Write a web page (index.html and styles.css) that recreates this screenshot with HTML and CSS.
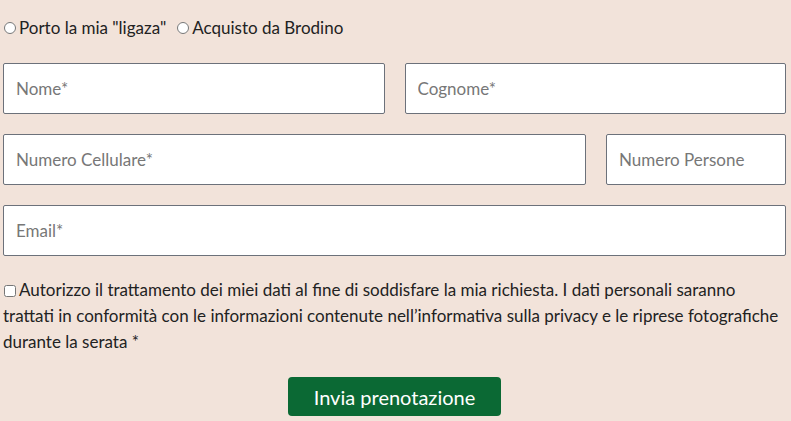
FILE: index.html
```html
<!DOCTYPE html>
<html lang="it">
<head>
<meta charset="utf-8">
<title>Prenotazione</title>
<link rel="stylesheet" href="styles.css">
</head>
<body>
<form class="form">
  <div class="choices">
    <label class="choice"><input type="radio" name="ligaza" class="radio">Porto la mia "ligaza"</label>
    <label class="choice"><input type="radio" name="ligaza" class="radio">Acquisto da Brodino</label>
  </div>
  <div class="row row-half">
    <input class="field" type="text" placeholder="Nome*">
    <input class="field" type="text" placeholder="Cognome*">
  </div>
  <div class="row row-phone">
    <input class="field" type="text" placeholder="Numero Cellulare*">
    <input class="field" type="text" placeholder="Numero Persone">
  </div>
  <div class="row row-full">
    <input class="field" type="email" placeholder="Email*">
  </div>
  <label class="consent"><input type="checkbox" class="check">Autorizzo il trattamento dei miei dati al fine di soddisfare la mia richiesta. I dati personali saranno trattati in conformità con le informazioni contenute nell’informativa sulla privacy e le riprese fotografiche durante la serata *</label>
  <div class="actions">
    <button type="button" class="submit">Invia prenotazione</button>
  </div>
</form>
</body>
</html>
```
FILE: styles.css
```css
html, body {
  margin: 0;
  padding: 0;
  background: #f2e3da;
}
body {
  font-family: Lato, "Open Sans", sans-serif;
  color: #222;
  font-size: 17px;
}
.form {
  width: 783px;
  margin-left: 3px;
  padding-top: 15px;
  display: flex;
  flex-direction: column;
}
.choices {
  display: flex;
  gap: 10px;
  line-height: 26px;
  height: 26px;
  margin-bottom: 22px;
}
.choice {
  display: flex;
  align-items: center;
}
.radio {
  width: 12px;
  height: 12px;
  margin: 0 3px 0 1px;
}
.row {
  display: grid;
  gap: 20px;
  margin-bottom: 20px;
}
.row-half { grid-template-columns: 1fr 1fr; }
.row-phone { grid-template-columns: 1fr 180px; }
.row-full { grid-template-columns: 1fr; margin-bottom: 21px; }
.field {
  box-sizing: border-box;
  height: 51px;
  border: 1px solid #6c717a;
  border-radius: 2px;
  background: #fff;
  padding: 0 12px;
  font-family: Lato, sans-serif;
  font-size: 17px;
  color: #222;
}
.field::placeholder { color: #777; }
.consent {
  display: block;
  line-height: 26px;
  font-size: 17px;
  color: #222;
}
.check {
  width: 12px;
  height: 12px;
  margin: 0 3px 0 1px;
  vertical-align: -1px;
}
.actions {
  display: flex;
  justify-content: center;
  margin-top: 22px;
}
.submit {
  width: 213px;
  height: 39px;
  border: 0;
  border-radius: 4px;
  background: #0b6934;
  color: #fff;
  font-family: Lato, sans-serif;
  font-size: 20px;
  cursor: pointer;
}
```
